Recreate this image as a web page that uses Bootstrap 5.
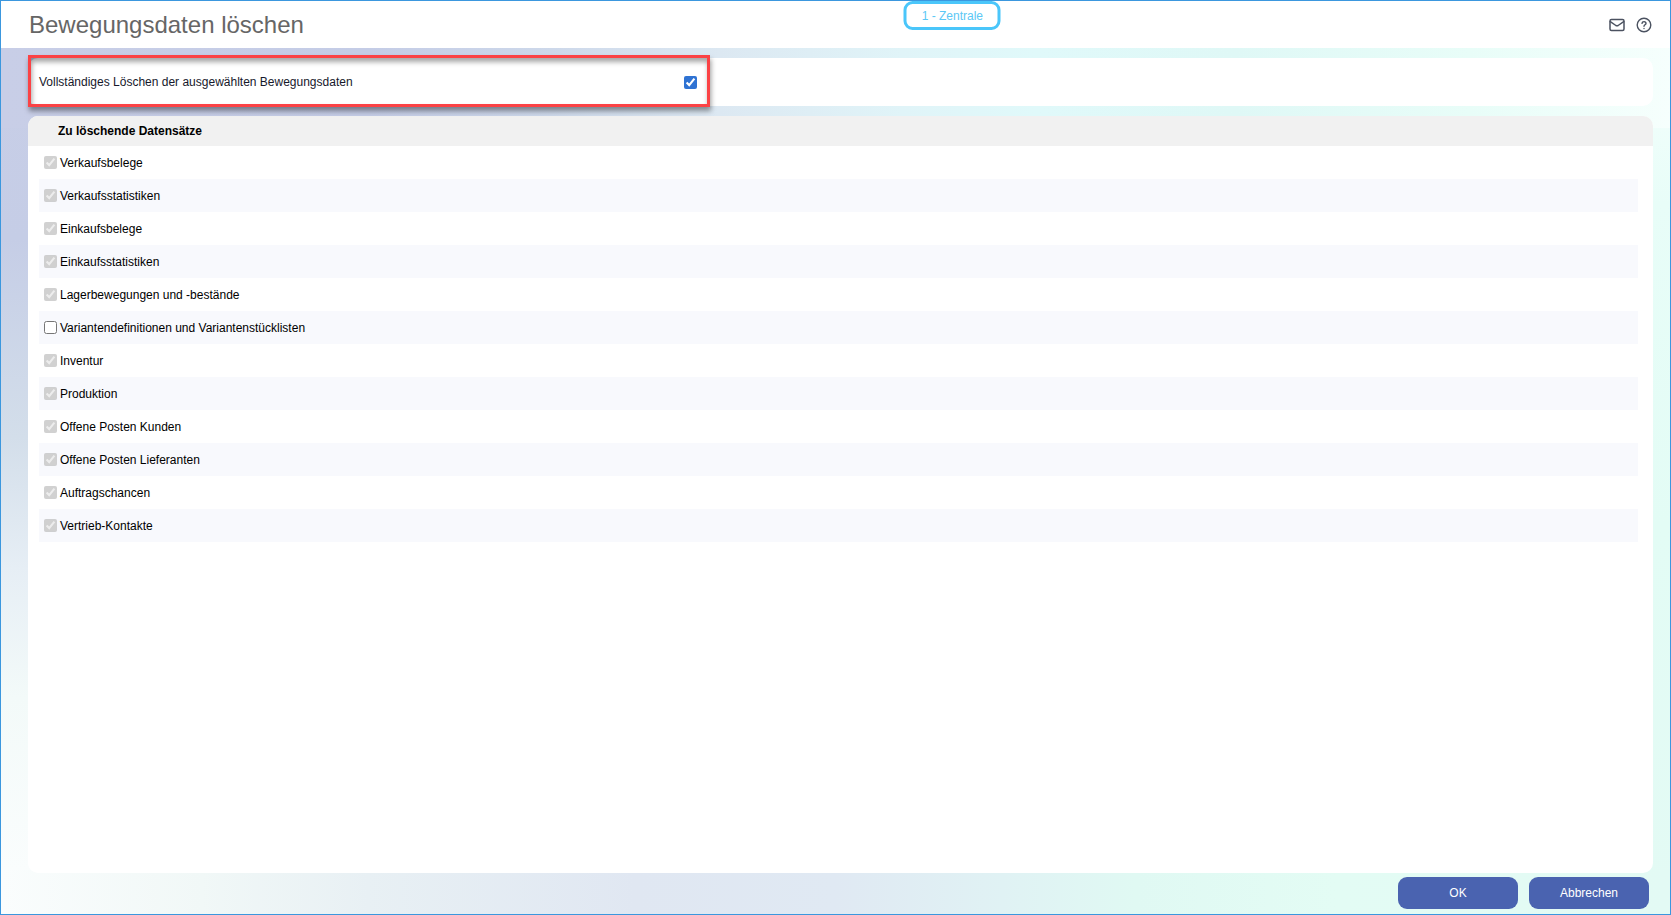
<!DOCTYPE html>
<html lang="de">
<head>
<meta charset="utf-8">
<meta name="viewport" content="width=device-width, initial-scale=1">
<title>Bewegungsdaten löschen</title>
<link href="https://cdn.jsdelivr.net/npm/bootstrap@5.3.0/dist/css/bootstrap.min.css" rel="stylesheet">
<style>
  body {
    font-family: "Liberation Sans", Arial, sans-serif;
    font-size: 12px;
    line-height: 16px;
    color: #000;
    border: 1px solid #3b97de;
  }
  .app-header { height: 47px; padding-left: 28px; padding-right: 18px; }
  .app-title { font-size: 24px; line-height: 32px; color: #666; }
  .branch-tag {
    top: 0;
    left: 57%;
    transform: translateX(-50%);
    width: 97px;
    height: 29px;
    line-height: 24px;
    border: 3px solid #4ac6fa;
    border-radius: 9px;
    color: #5cc8f5;
  }
  .header-icons { gap: 11px; }
  .icon-btn { width: 16px; height: 16px; color: #4b5260; }
  .app-body {
    gap: 10px;
    padding: 10px 17px 5px 27px;
    background:
      linear-gradient(90deg, #c8cee7 0, #c4cce6 22%, #cdd8ea 33%, #dce8f2 43%, #e0f4f8 54%, #e0f9fa 62%, #dff8f6 74%, #e8fdf8 88%, #f6fffd 100%) top / 100% 80px no-repeat,
      linear-gradient(90deg, #fafdfd 0, #f1f8f7 12%, #e8f0f4 22%, #e0e7f2 38%, #e0e9f3 50%, #e0f2f4 60%, #e0f9f3 68%, #e3fcf4 80%, #e3faf4 100%) bottom / 100% 44px no-repeat,
      linear-gradient(180deg, #c8cee7 0, #c5cde6 22%, #d3deea 45%, #e6eef5 60%, #f3faf9 75%, #fafdfd 95%) left / 50% 100% no-repeat,
      linear-gradient(180deg, #f5fffd 0, #e8fdf8 18%, #e3fcf5 55%, #e3faf4 100%) right / 50% 100% no-repeat;
  }
  .panel { border-radius: 10px; background: #fff; }
  .option-row { width: 42%; height: 48px; padding: 0 14px 0 11px; }
  .option-row label { color: #16182b; }
  .option-row::after {
    content: "";
    position: absolute;
    inset: -3px 1px -1px 0;
    border: 3px solid #fb4245;
    box-shadow: 1px 4px 5px rgba(0, 0, 0, .4), inset 1px 4px 5px rgba(0, 0, 0, .35);
    pointer-events: none;
  }
  .panel-head { height: 30px; padding-left: 30px; background: #f1f1f1; font-size: 12px; line-height: 16px; }
  .record-list { padding: 0 15px 0 11px; }
  .record-list li { height: 33px; padding-left: 5px; gap: 3px; }
  .record-list li:nth-child(even) { background: #f8f9fd; }
  input[type="checkbox"] { width: 13px; height: 13px; margin: 0; accent-color: #2f73d3; }
  .action-btn {
    width: 120px;
    height: 32px;
    padding: 0;
    font-size: 12px;
    border: 0;
    border-radius: 9px;
    color: #fff;
    background: #4a63b0;
  }
  .action-btn:hover { color: #fff; background: #3e569f; }
  .action-bar { margin-top: -6px; padding-right: 4px; gap: 11px; }
</style>
</head>
<body class="d-flex flex-column min-vh-100">
  <header class="app-header position-relative d-flex align-items-center justify-content-between bg-white">
    <h1 class="app-title fw-normal m-0">Bewegungsdaten löschen</h1>
    <div class="branch-tag position-absolute text-center">1 - Zentrale</div>
    <div class="header-icons d-flex">
      <button type="button" class="icon-btn btn p-0 border-0 d-flex" aria-label="Nachricht">
        <svg width="16" height="16" viewBox="0 0 16 16" fill="none" stroke="currentColor" stroke-width="1.5" stroke-linejoin="round" stroke-linecap="round"><rect x="1" y="2.5" width="14" height="11" rx="1.5"/><path d="M1.3 4.7 6.9 8.5Q8 9.2 9.1 8.5L14.7 4.7"/></svg>
      </button>
      <button type="button" class="icon-btn btn p-0 border-0 d-flex" aria-label="Hilfe">
        <svg width="16" height="16" viewBox="0 0 16 16" fill="none" stroke="currentColor" stroke-width="1.4" stroke-linecap="round" stroke-linejoin="round"><circle cx="8" cy="8" r="6.8"/><path d="M6 6.3Q6.2 4.6 8 4.6 10 4.7 10 6.4C10 7.7 8 7.9 8 9.2"/><path d="M8 11.4v.1"/></svg>
      </button>
    </div>
  </header>

  <main class="app-body flex-grow-1 d-flex flex-column">
    <section class="panel">
      <div class="option-row position-relative d-flex align-items-center justify-content-between">
        <label for="full-delete">Vollständiges Löschen der ausgewählten Bewegungsdaten</label>
        <input type="checkbox" id="full-delete" checked>
      </div>
    </section>

    <section class="panel flex-grow-1 overflow-hidden">
      <h2 class="panel-head d-flex align-items-center fw-bold m-0">Zu löschende Datensätze</h2>
      <ul class="record-list list-unstyled m-0">
        <li class="d-flex align-items-center"><input type="checkbox" id="r1" checked disabled><label for="r1">Verkaufsbelege</label></li>
        <li class="d-flex align-items-center"><input type="checkbox" id="r2" checked disabled><label for="r2">Verkaufsstatistiken</label></li>
        <li class="d-flex align-items-center"><input type="checkbox" id="r3" checked disabled><label for="r3">Einkaufsbelege</label></li>
        <li class="d-flex align-items-center"><input type="checkbox" id="r4" checked disabled><label for="r4">Einkaufsstatistiken</label></li>
        <li class="d-flex align-items-center"><input type="checkbox" id="r5" checked disabled><label for="r5">Lagerbewegungen und -bestände</label></li>
        <li class="d-flex align-items-center"><input type="checkbox" id="r6"><label for="r6">Variantendefinitionen und Variantenstücklisten</label></li>
        <li class="d-flex align-items-center"><input type="checkbox" id="r7" checked disabled><label for="r7">Inventur</label></li>
        <li class="d-flex align-items-center"><input type="checkbox" id="r8" checked disabled><label for="r8">Produktion</label></li>
        <li class="d-flex align-items-center"><input type="checkbox" id="r9" checked disabled><label for="r9">Offene Posten Kunden</label></li>
        <li class="d-flex align-items-center"><input type="checkbox" id="r10" checked disabled><label for="r10">Offene Posten Lieferanten</label></li>
        <li class="d-flex align-items-center"><input type="checkbox" id="r11" checked disabled><label for="r11">Auftragschancen</label></li>
        <li class="d-flex align-items-center"><input type="checkbox" id="r12" checked disabled><label for="r12">Vertrieb-Kontakte</label></li>
      </ul>
    </section>

    <div class="action-bar d-flex justify-content-end">
      <button type="button" class="action-btn btn">OK</button>
      <button type="button" class="action-btn btn">Abbrechen</button>
    </div>
  </main>
<script src="https://cdn.jsdelivr.net/npm/bootstrap@5.3.0/dist/js/bootstrap.bundle.min.js"></script>
</body>
</html>
